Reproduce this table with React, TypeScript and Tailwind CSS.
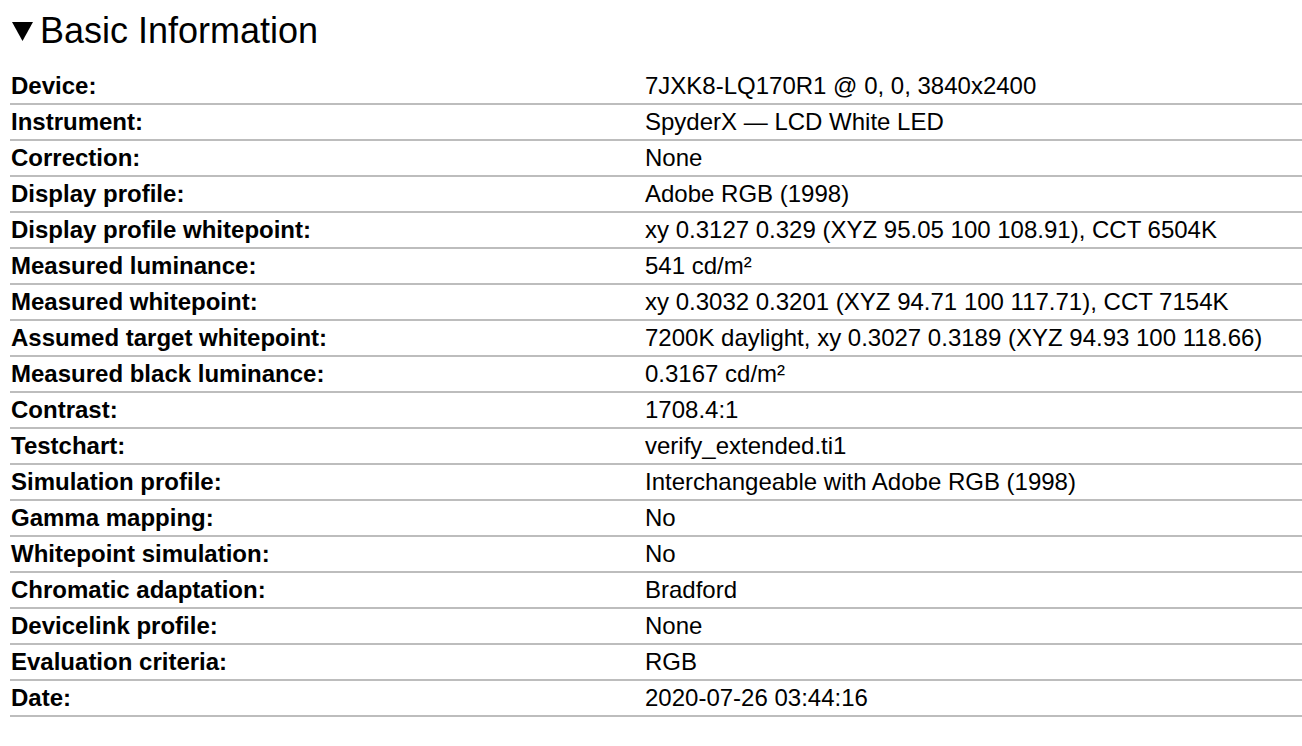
const rows: [string, string][] = [
  ['Device:', '7JXK8-LQ170R1 @ 0, 0, 3840x2400'],
  ['Instrument:', 'SpyderX — LCD White LED'],
  ['Correction:', 'None'],
  ['Display profile:', 'Adobe RGB (1998)'],
  ['Display profile whitepoint:', 'xy 0.3127 0.329 (XYZ 95.05 100 108.91), CCT 6504K'],
  ['Measured luminance:', '541 cd/m²'],
  ['Measured whitepoint:', 'xy 0.3032 0.3201 (XYZ 94.71 100 117.71), CCT 7154K'],
  ['Assumed target whitepoint:', '7200K daylight, xy 0.3027 0.3189 (XYZ 94.93 100 118.66)'],
  ['Measured black luminance:', '0.3167 cd/m²'],
  ['Contrast:', '1708.4:1'],
  ['Testchart:', 'verify_extended.ti1'],
  ['Simulation profile:', 'Interchangeable with Adobe RGB (1998)'],
  ['Gamma mapping:', 'No'],
  ['Whitepoint simulation:', 'No'],
  ['Chromatic adaptation:', 'Bradford'],
  ['Devicelink profile:', 'None'],
  ['Evaluation criteria:', 'RGB'],
  ['Date:', '2020-07-26 03:44:16'],
]

export default function App() {
  return (
    <div
      className="min-h-[746px] bg-white text-black"
      style={{ fontFamily: '"Liberation Sans", Arial, Helvetica, sans-serif' }}
    >
      <div className="flex h-[62px] items-center pl-[12px]">
        <svg width="21" height="19" viewBox="0 0 21 19" className="mr-[7px]">
          <polygon points="0,0 21,0 10.5,19" fill="#000" />
        </svg>
        <h2 className="text-[36px] leading-none">Basic Information</h2>
      </div>
      <div className="ml-[10px] mt-[7px]">
        {rows.map(([label, value]) => (
          <div key={label} className="flex h-[36px] items-center border-b-2 border-[#bdbdbd] text-[24px]">
            <div className="w-[635px] pl-[1px] font-bold">{label}</div>
            <div>{value}</div>
          </div>
        ))}
      </div>
    </div>
  )
}
